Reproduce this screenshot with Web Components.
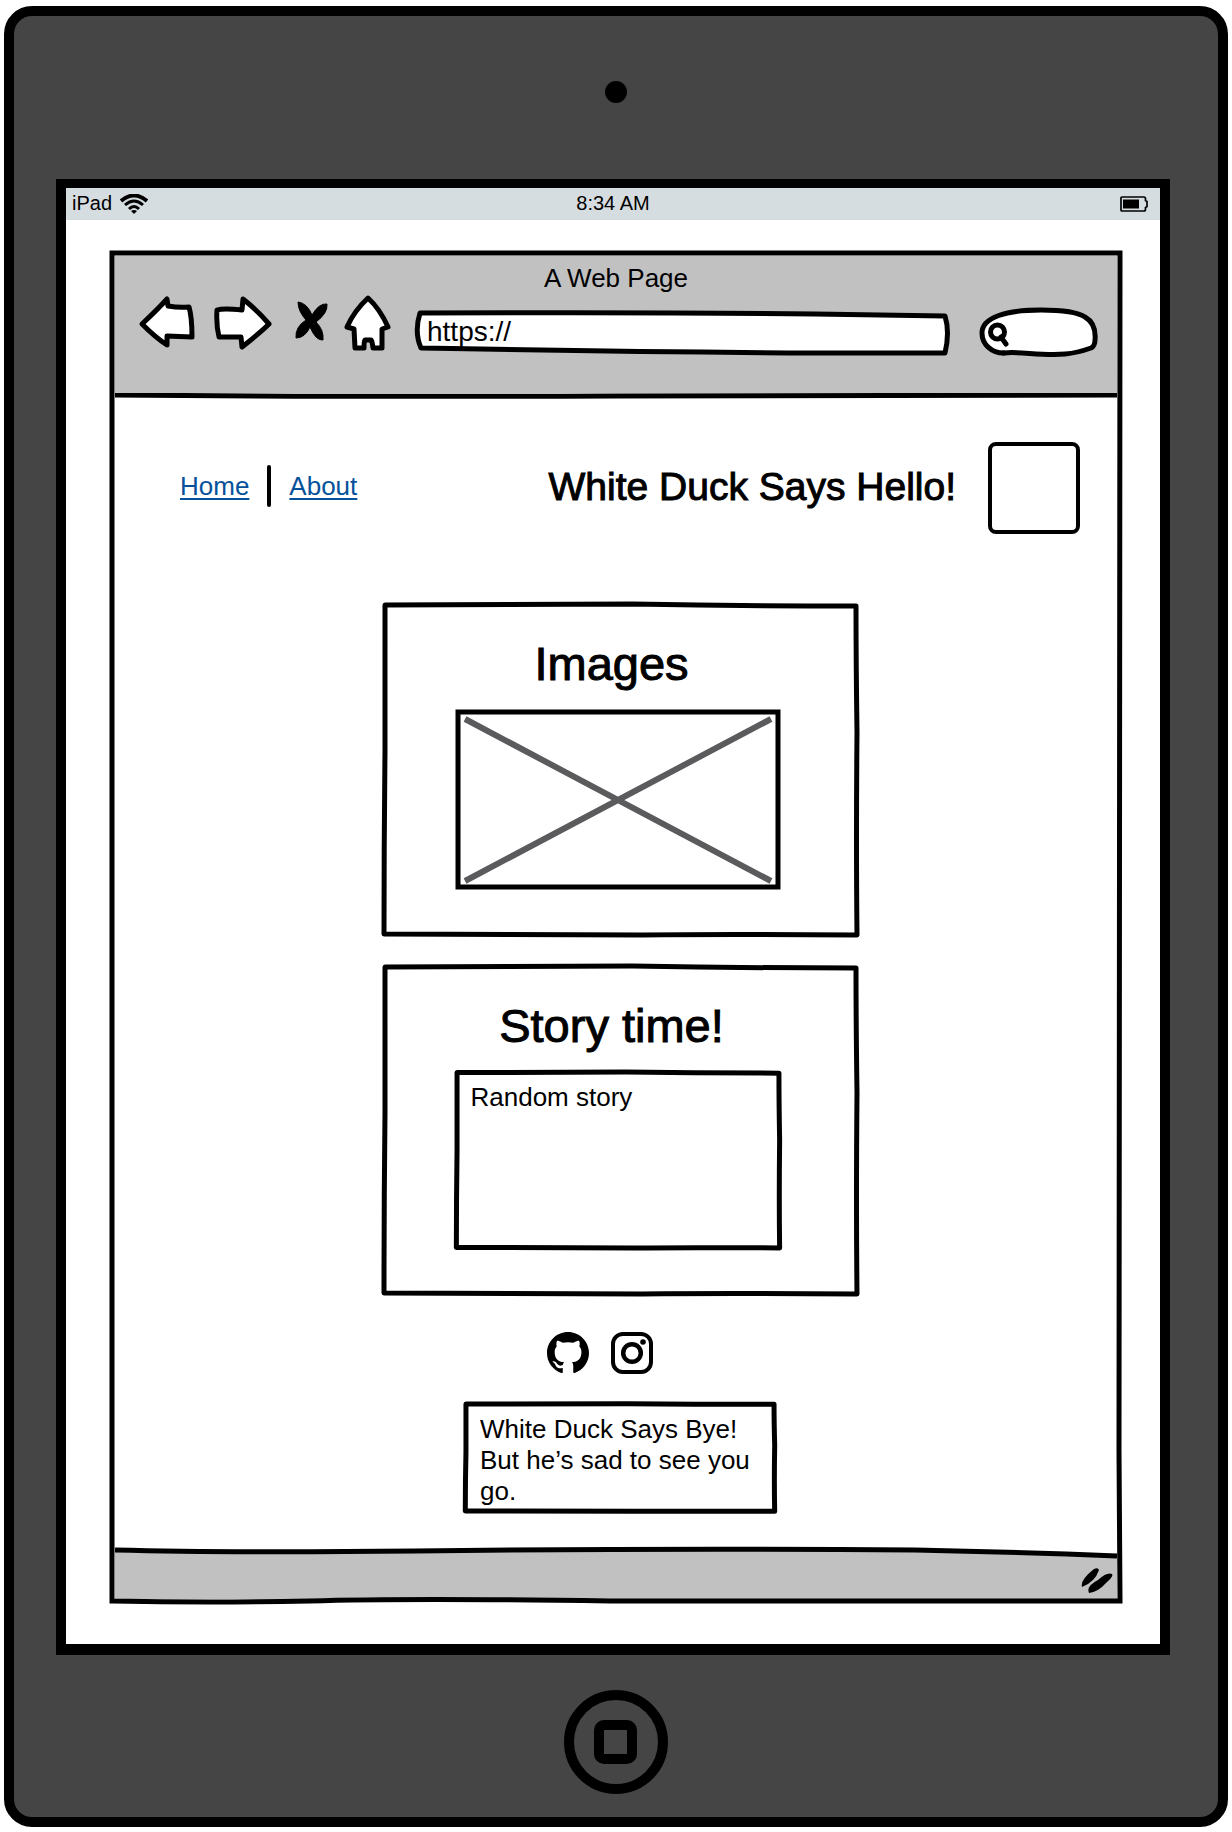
<!DOCTYPE html>
<html lang="en">
<head>
<meta charset="utf-8">
<meta name="viewport" content="width=device-width, initial-scale=1">
<title>White Duck Says Hello!</title>
<style>
  body { margin: 0; padding: 6px 4px 4px; background: #fff; color: #000; font-family: "Liberation Sans", Arial, sans-serif; }
</style>
</head>
<body>
<tablet-device>
  <status-bar device="iPad" time="8:34 AM"></status-bar>
  <browser-window heading="A Web Page" url="https://">
    <site-header heading="White Duck Says Hello!"></site-header>
    <site-main>
      <content-card heading="Images"><image-placeholder></image-placeholder></content-card>
      <content-card heading="Story time!"><story-box>Random story</story-box></content-card>
      <social-links></social-links>
      <farewell-note>White Duck Says Bye! But he’s sad to see you go.</farewell-note>
    </site-main>
  </browser-window>
</tablet-device>

<script>
const define = (name, html, setup) => {
  const template = document.createElement('template');
  template.innerHTML = html;
  customElements.define(name, class extends HTMLElement {
    constructor() {
      super();
      this.attachShadow({ mode: 'open' }).append(template.content.cloneNode(true));
    }
    connectedCallback() {
      if (setup) setup(this.shadowRoot, this);
    }
  });
};
const fill = (root, host, ...names) => names.forEach(n => {
  root.getElementById(n).textContent = host.getAttribute(n) || '';
});

/* Hand-drawn rectangle that stretches behind its content. */
define('sketch-frame', `
  <style>
    :host { display: block; position: relative; isolation: isolate; box-sizing: border-box; }
    svg { position: absolute; inset: 0; width: 100%; height: 100%; z-index: -1; overflow: visible; }
    path { fill: #fff; stroke: #000; stroke-width: 5; stroke-linejoin: round; vector-effect: non-scaling-stroke; }
  </style>
  <svg viewBox="0 0 477 335" preserveAspectRatio="none" aria-hidden="true">
    <path d="M3 3Q150 2 250 2Q360 4 474 4Q474 60 475 130Q474 240 475 333Q340 332 260 333Q120 333 2 332Q2 240 3 150Q3 70 3 3Z"/>
  </svg>
  <slot></slot>`);

define('tablet-device', `
  <style>
    :host { display: block; box-sizing: border-box; border: 10px solid #000; border-radius: 28px; background: #454545; padding: 0 48px 0 42px; }
    .top { display: flex; align-items: center; justify-content: center; height: 152px; padding: 0 0 11px 6px; }
    .camera { width: 22px; height: 22px; border-radius: 50%; background: #000; }
    .screen { border: solid #000; border-width: 9px 10px 11px; background: #fff; }
    .bottom { display: flex; justify-content: center; padding: 35px 0 23px 6px; }
    button { width: 104px; height: 104px; padding: 0; border: 0; background: none; }
    svg { display: block; }
  </style>
  <div class="top"><div class="camera"></div></div>
  <div class="screen"><slot></slot></div>
  <div class="bottom">
    <button aria-label="Home button">
      <svg width="104" height="104" viewBox="0 0 104 104" fill="none" stroke="#000" stroke-width="10">
        <circle cx="52" cy="52" r="47"/><rect x="35" y="35" width="33" height="34" rx="5"/>
      </svg>
    </button>
  </div>`);

define('status-bar', `
  <style>
    :host { display: grid; grid-template-columns: 1fr auto 1fr; align-items: center; height: 32px; padding: 0 6px; box-sizing: border-box; background: #d6dde0; font-size: 20px; line-height: 28px; }
    .left { display: flex; align-items: center; gap: 8px; }
    span { padding-bottom: 2px; }
    svg { display: block; }
    .battery { justify-self: end; margin-right: 6px; }
  </style>
  <div class="left"><span id="device"></span>
    <svg width="28" height="20" viewBox="0 0 28 20" fill="none" stroke="#000" stroke-width="4" aria-hidden="true">
      <path d="M1 7Q14 -4 27 7"/><path stroke-width="3" d="M5 11Q14 3 23 11M9 15Q14 10 19 15"/><path d="M11 17q3-2 6 0l-3 3z" fill="#000" stroke="none"/>
    </svg>
  </div>
  <span id="time"></span>
  <svg class="battery" width="28" height="16" viewBox="0 0 28 16" aria-hidden="true">
    <path d="M2 1h22q1.500 0 1.500 2v1.500l1.500 1v5l-1.500 1V13q0 2-1.500 2H2q-1 0-1-1V2q0-1 1-1z" fill="none" stroke="#000" stroke-width="1.700"/>
    <path d="M3 3.500h16v9H3z"/>
  </svg>`, (r, h) => fill(r, h, 'device', 'time'));

define('browser-toolbar', `
  <style>
    :host { display: block; position: relative; isolation: isolate; background: #c1c1c1; padding: 7px 18px 36px 24px; }
    .title { font-size: 26px; line-height: 30px; text-align: center; padding-right: 6px; margin-bottom: 3px; }
    .row { display: flex; align-items: flex-end; height: 61px; }
    .tools { display: flex; gap: 18px; align-self: flex-start; }
    button { display: block; padding: 0; border: 0; background: none; }
    svg { display: block; overflow: visible; }
    .tools path { fill: #fff; stroke: #000; stroke-width: 5; stroke-linejoin: round; }
    .tools path.solid { fill: #000; stroke-width: 1; }
    .field { position: relative; isolation: isolate; }
    .field svg { position: absolute; inset: 0; width: 100%; height: 100%; z-index: -1; }
    .field .outline { fill: #fff; stroke: #000; stroke-width: 5; stroke-linejoin: round; vector-effect: non-scaling-stroke; }
    .url { flex: 1; height: 45px; margin: 0 29px 2px 25px; }
    .search { width: 120px; height: 50px; }
    input { display: block; width: 100%; height: 100%; box-sizing: border-box; border: 0; background: none; color: #000; font: 28px "Liberation Sans", Arial, sans-serif; outline: 0; padding: 0 12px 2px; }
    .search input { padding-left: 34px; appearance: none; }
  </style>
  <div class="title" id="heading"></div>
  <div class="row">
    <div class="tools">
      <button aria-label="Back"><svg width="56" height="55" viewBox="0 -1 56 55"><path d="M3 27Q18 13 28 2L29 9Q40 11 50 10Q53 20 53 40L28 39V48Q17 41 3 27Z"/></svg></button>
      <button aria-label="Forward"><svg width="58" height="55" viewBox="0 -1 58 55"><path d="M4 13Q10 11 29 13L30 2Q44 13 56 27Q48 35 29 50L28 40L6 40Q3 28 4 13Z"/></svg></button>
      <button aria-label="Stop"><svg width="38" height="55" viewBox="0 -6 38 55"><path class="solid" d="M9 0Q18 1 23 13Q30 1 38 2Q39 11 27 20Q35 28 34 38Q27 39 21 25Q16 36 7 36Q6 25 17 18Q9 9 9 0Z"/></svg></button>
      <button aria-label="Home page"><svg width="45" height="55" viewBox="0 0 45 55"><path d="M23 2Q35 13 43 31L37 33L37 52L28 52Q27 44 26 44H20Q19 45 19 52L10 52L9 33L2 31Q9 15 23 2Z"/></svg></button>
    </div>
    <div class="field url">
      <svg viewBox="0 0 535 45" preserveAspectRatio="none" aria-hidden="true"><path class="outline" d="M5 3Q250 2 400 4L530 6Q535 22 530 43H400Q220 42 6 38Q-1 22 5 3Z"/></svg>
      <input id="url" type="text" aria-label="Address">
    </div>
    <div class="field search">
      <svg viewBox="0 0 120 50" aria-hidden="true">
        <path class="outline" d="M3 26C3 10 28 3 62 3C85 3 100 6 106 10C113 14 117 22 116 33Q116 39 112 41Q98 46 86 47C62 49 40 44 25 46C12 46 3 37 3 26Z"/>
        <circle cx="18.500" cy="25" r="7" fill="none" stroke="#000" stroke-width="5"/>
        <path d="M22 30L27 37M24 46h1" stroke="#000" stroke-width="5" stroke-linecap="round"/>
      </svg>
      <input id="search" type="search" aria-label="Search">
    </div>
  </div>`, (r, h) => {
  fill(r, h, 'heading');
  r.getElementById('url').value = h.getAttribute('url') || '';
});

define('browser-window', `
  <style>
    :host { display: block; position: relative; margin: 31px 38px 40px 44px; padding: 5px; }
    .line { display: block; width: 100%; height: 5px; overflow: visible; }
    .page { display: block; }
    footer { display: flex; justify-content: flex-end; position: relative; isolation: isolate; height: 50px; }
    .bar, .outline { position: absolute; inset: 0; width: 100%; height: 100%; overflow: visible; pointer-events: none; }
    .bar { z-index: -1; }
    path { vector-effect: non-scaling-stroke; }
    .ink { fill: none; stroke: #000; stroke-width: 5; }
    .grip { display: block; width: 32px; height: 26px; margin: 19px 4px 0 0; }
  </style>
  <browser-toolbar></browser-toolbar>
  <svg class="line" viewBox="0 0 1002 5" preserveAspectRatio="none" aria-hidden="true"><path class="ink" d="M0 2Q200 4 500 3Q800 2 1002 2"/></svg>
  <div class="page"><slot></slot></div>
  <footer>
    <svg class="bar" viewBox="0 0 1002 50" preserveAspectRatio="none" aria-hidden="true">
      <path fill="#c1c1c1" d="M0 1Q120 4 300 2Q550 -1 800 1Q900 3 1002 7V50H0Z"/>
      <path class="ink" d="M0 1Q120 4 300 2Q550 -1 800 1Q900 3 1002 7"/>
    </svg>
    <svg class="grip" viewBox="0 0 32 26" aria-hidden="true"><path d="M1 19Q-1 12 13 1Q17-1 18 2Q14 14 1 19ZM8 25Q5 18 17 12Q26 4 31 6Q33 8 25 15Q17 24 8 25Z"/></svg>
  </footer>
  <svg class="outline" viewBox="0 0 1012 1353" preserveAspectRatio="none" aria-hidden="true">
    <path class="ink" d="M2 2H1010Q1009 700 1009 1200L1010 1350Q800 1351 500 1350Q300 1347 200 1350Q100 1352 2 1350Q3 1200 2 700Q1 350 2 2Z"/>
  </svg>`, (r, h) => {
  const bar = r.querySelector('browser-toolbar');
  bar.setAttribute('heading', h.getAttribute('heading'));
  bar.setAttribute('url', h.getAttribute('url'));
  bar.shadowRoot.getElementById('heading').textContent = h.getAttribute('heading');
  bar.shadowRoot.getElementById('url').value = h.getAttribute('url');
});

define('site-header', `
  <style>
    :host { display: flex; align-items: center; justify-content: space-between; padding: 44px 37px 0 65px; }
    nav, .brand { display: flex; align-items: center; }
    nav { gap: 18px; padding-bottom: 4px; font-size: 26px; line-height: 30px; }
    a { color: #06529a; text-decoration-thickness: 2px; text-underline-offset: 3px; }
    .rule { width: 4px; height: 42px; border-radius: 2px; background: #000; }
    .brand { gap: 32px; }
    h1 { margin: 0; padding-bottom: 2px; font-size: 39px; line-height: 48px; font-weight: 400; -webkit-text-stroke: 1px #000; }
    .logo { width: 92px; height: 92px; box-sizing: border-box; border: 4px solid #000; border-radius: 8px; }
  </style>
  <nav aria-label="Main"><a href="#home">Home</a><span class="rule"></span><a href="#about">About</a></nav>
  <div class="brand"><h1 id="heading"></h1><div class="logo"></div></div>`, (r, h) => fill(r, h, 'heading'));

define('site-main', `
  <style>
    :host { display: flex; flex-direction: column; align-items: center; gap: 27px; padding: 68px 0 37px 8px; }
  </style>
  <slot></slot>`);

define('content-card', `
  <style>
    :host { display: block; width: 477px; max-width: 100%; }
    sketch-frame { padding: 34px 78px 47px 73px; }
    h2 { margin: 0 0 17px; padding-right: 12px; text-align: center; font-size: 47px; line-height: 56px; font-weight: 400; -webkit-text-stroke: 1px #000; }
  </style>
  <sketch-frame><h2 id="heading"></h2><slot></slot></sketch-frame>`, (r, h) => fill(r, h, 'heading'));

define('image-placeholder', `
  <style>
    :host { display: block; height: 181px; }
    svg { display: block; width: 100%; height: 100%; }
    path { fill: none; stroke: #000; stroke-width: 5; vector-effect: non-scaling-stroke; }
    .cross { stroke: #5b5b5d; stroke-width: 6; }
  </style>
  <svg viewBox="0 0 325 181" preserveAspectRatio="none" role="img" aria-label="Image placeholder">
    <path d="M3 3H322V178H3Z"/><path class="cross" d="M10 10L315 172M315 10L10 172"/>
  </svg>`);

define('story-box', `
  <style>
    :host { display: block; font-size: 26px; line-height: 31px; }
    sketch-frame { min-height: 178px; padding: 11px 16px; }
  </style>
  <sketch-frame><slot></slot></sketch-frame>`);

define('social-links', `
  <style>
    :host { display: flex; gap: 22px; padding: 9px 40px 2px 0; }
    a { display: block; color: #000; }
    svg { display: block; width: 42px; height: 42px; }
  </style>
  <a href="#github" aria-label="GitHub"><svg viewBox="0 0 16 16" fill="currentColor"><path d="M8 0C3.580 0 0 3.580 0 8c0 3.540 2.290 6.530 5.470 7.590.4.070.55-.17.55-.38 0-.19-.01-.82-.01-1.490-2.010.37-2.530-.49-2.690-.94-.09-.23-.48-.94-.82-1.130-.28-.15-.68-.52-.01-.53.63-.01 1.080.58 1.230.82.72 1.210 1.870.87 2.330.66.070-.52.28-.87.51-1.070-1.780-.2-3.640-.89-3.640-3.950 0-.87.31-1.590.82-2.150-.08-.2-.36-1.020.08-2.120 0 0 .67-.21 2.200.82.64-.18 1.320-.27 2-.27s1.360.09 2 .27c1.530-1.040 2.200-.82 2.200-.82.44 1.100.16 1.920.08 2.120.51.56.82 1.270.82 2.150 0 3.070-1.870 3.750-3.650 3.950.29.25.54.73.54 1.480 0 1.070-.01 1.930-.01 2.200 0 .21.15.46.55.38A8.010 8.010 0 0 0 16 8c0-4.420-3.580-8-8-8z"/></svg></a>
  <a href="#instagram" aria-label="Instagram"><svg viewBox="0 0 42 42" fill="none" stroke="currentColor" stroke-width="4"><rect x="2" y="2" width="38" height="38" rx="10"/><circle cx="21" cy="21" r="8.800" stroke-width="4.500"/><circle cx="32" cy="10" r="2.800" fill="currentColor" stroke="none"/></svg></a>`);

define('farewell-note', `
  <style>
    :host { display: block; width: 312px; max-width: 100%; font-size: 26px; line-height: 31px; }
    sketch-frame { padding: 11px 8px 5px 16px; }
  </style>
  <sketch-frame><slot></slot></sketch-frame>`);
</script>
</body>
</html>
